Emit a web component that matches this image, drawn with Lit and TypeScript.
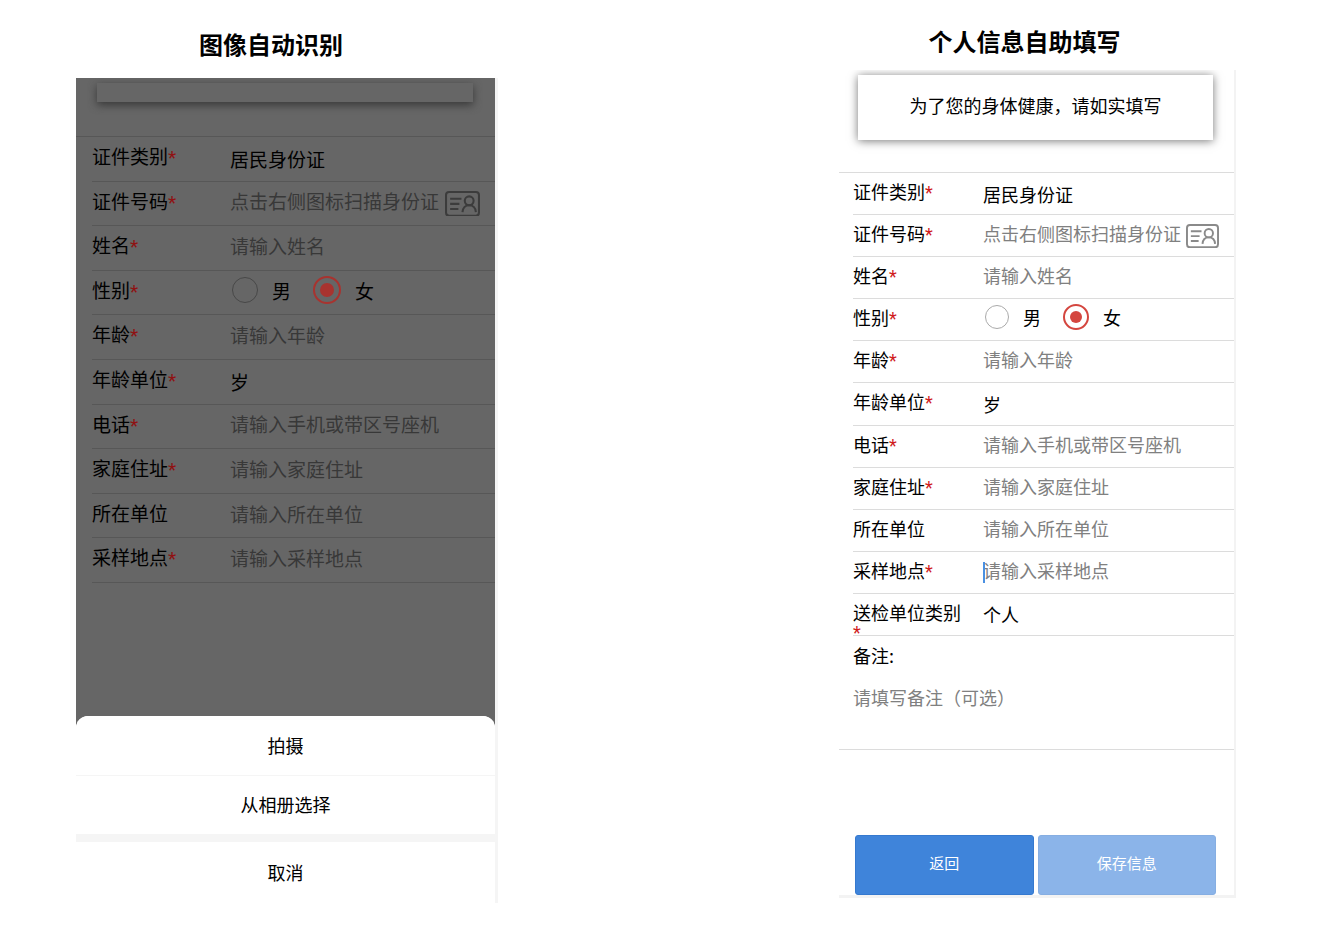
import { LitElement, html, css, svg, nothing } from "lit";
import { customElement, property } from "lit/decorators.js";

type Field = {
  id: string;
  label: string;
  required?: boolean;
  kind: "text" | "select" | "scan" | "gender";
  hint?: string;
  value?: string;
  caret?: boolean;
};

const baseFields: Field[] = [
  { id: "cardType", label: "证件类别", required: true, kind: "select", value: "居民身份证" },
  { id: "cardNo", label: "证件号码", required: true, kind: "scan", hint: "点击右侧图标扫描身份证" },
  { id: "name", label: "姓名", required: true, kind: "text", hint: "请输入姓名" },
  { id: "gender", label: "性别", required: true, kind: "gender" },
  { id: "age", label: "年龄", required: true, kind: "text", hint: "请输入年龄" },
  { id: "ageUnit", label: "年龄单位", required: true, kind: "select", value: "岁" },
  { id: "phone", label: "电话", required: true, kind: "text", hint: "请输入手机或带区号座机" },
  { id: "address", label: "家庭住址", required: true, kind: "text", hint: "请输入家庭住址" },
  { id: "company", label: "所在单位", kind: "text", hint: "请输入所在单位" },
  { id: "place", label: "采样地点", required: true, kind: "text", hint: "请输入采样地点" },
];

const fullFields: Field[] = [
  ...baseFields.map((f) => (f.id === "place" ? { ...f, caret: true } : f)),
  { id: "sender", label: "送检单位类别", required: true, kind: "select", value: "个人" },
];

const scanIcon = svg`
  <rect x="1" y="1" width="32" height="23" rx="3"></rect>
  <path d="M5 7.500h11M5 12.500h9M5 17.500h8"></path>
  <circle cx="23.500" cy="9.500" r="4.300"></circle>
  <path d="M17 20.500c.3-4.200 3-6.700 6.500-6.700s6.200 2.500 6.500 6.700"></path>`;

@customElement("info-form")
export class InfoForm extends LitElement {
  @property({ attribute: false }) fields: Field[] = [];

  static styles = css`
    :host {
      display: grid;
      grid-auto-rows: minmax(0, 1fr);
      border-top: 1px solid var(--line);
      font-size: var(--size);
      color: #000;
    }
    .row {
      display: flex;
      margin-left: var(--indent);
      border-bottom: 1px solid var(--line);
      box-sizing: border-box;
    }
    .name {
      flex: none;
      box-sizing: border-box;
      width: var(--label);
      padding: var(--drop) 18px 0 0;
      line-height: 19px;
    }
    .star {
      font-family: Roboto, sans-serif;
      color: var(--red);
    }
    input,
    select,
    button {
      font: inherit;
      color: inherit;
      border: 0;
      margin: 0;
      padding: 0;
      background: none;
      border-radius: 0;
      outline: 0;
    }
    .control {
      flex: 1;
      min-width: 0;
      height: 100%;
      box-sizing: border-box;
    }
    select {
      appearance: none;
    }
    input.control {
      padding-bottom: 5px;
    }
    input::placeholder {
      color: var(--hint);
      opacity: 1;
    }
    .entry {
      flex: 1;
      min-width: 0;
      display: flex;
      align-items: center;
      position: relative;
    }
    .caret {
      position: absolute;
      left: 0;
      width: 2px;
      height: 21px;
      background: #4a90e2;
    }
    .scan {
      flex: none;
      display: flex;
      margin-right: 15px;
    }
    .scan svg {
      width: var(--icon);
      fill: none;
      stroke: var(--icon-ink);
      stroke-width: 2;
    }
    .gender {
      display: flex;
      align-items: center;
      padding: 0 0 5px 2px;
    }
    .option {
      display: flex;
      align-items: center;
      gap: 14px;
      margin-right: 22px;
    }
    .option input {
      appearance: none;
      display: grid;
      place-items: center;
      width: var(--radio);
      height: var(--radio);
      box-sizing: border-box;
      border: 1px solid var(--ring);
      border-radius: 50%;
    }
    .option input:checked {
      width: var(--radio-on);
      height: var(--radio-on);
      border: 2px solid var(--accent);
    }
    .option input:checked::before {
      content: "";
      width: var(--dot);
      height: var(--dot);
      border-radius: 50%;
      background: var(--accent);
    }
  `;

  private control(f: Field) {
    if (f.kind === "select") {
      return html`<select class="control" id=${f.id}>
        <option>${f.value}</option>
      </select>`;
    }
    if (f.kind === "gender") {
      return html`<div class="gender" role="radiogroup" aria-labelledby="gender-label">
        <label class="option"><input type="radio" name="gender" value="m" />男</label>
        <label class="option"><input type="radio" name="gender" value="f" checked />女</label>
      </div>`;
    }
    return html`<div class="entry">
      ${f.caret ? html`<span class="caret"></span>` : nothing}
      <input class="control" type="text" id=${f.id} placeholder=${f.hint ?? ""} />
      ${f.kind === "scan"
        ? html`<button class="scan" type="button" aria-label="扫描身份证">
            <svg viewBox="0 0 34 25" aria-hidden="true">${scanIcon}</svg>
          </button>`
        : nothing}
    </div>`;
  }

  render() {
    return this.fields.map((f) => {
      const text = html`${f.label}${f.required ? html`<wbr /><span class="star">*</span>` : nothing}`;
      return html`<div class="row">
        ${f.kind === "gender"
          ? html`<span class="name" id="gender-label">${text}</span>`
          : html`<label class="name" for=${f.id}>${text}</label>`}
        ${this.control(f)}
      </div>`;
    });
  }
}

@customElement("app-root")
export class AppRoot extends LitElement {
  static styles = css`
    :host {
      display: block;
      background: #fff;
      min-height: 100vh;
      font-family: "Noto Sans CJK SC", "Noto Sans", sans-serif;
      color: #000;
    }
    .page {
      display: grid;
      grid-template-columns: 422fr 341fr 397fr;
      padding: 0 101px 0 76px;
    }
    .right {
      grid-column: 3;
    }
    h2 {
      margin: 0;
      font-size: 24px;
      line-height: 32px;
      font-weight: 700;
      text-align: center;
    }
    .left h2 {
      padding: 28px 32px 18px 0;
    }
    .right h2 {
      padding: 25px 26px 13px 0;
    }
    .dimmed {
      --size: 19px;
      --label: 138px;
      --indent: 16px;
      --drop: 9px;
      --line: #575757;
      --hint: #383838;
      --red: #8f1212;
      --ring: #484848;
      --accent: #a8332f;
      --icon: 35px;
      --icon-ink: #3c3c3c;
      --radio: 26px;
      --radio-on: 28px;
      --dot: 14px;
      border-right: 3px solid #f5f5f5;
      background: #666;
    }
    .peek {
      height: 58px;
      overflow: hidden;
      padding: 0 22px 0 21px;
      box-sizing: border-box;
    }
    .strip {
      margin-top: 5px;
      height: 19px;
      background: #666;
      box-shadow: 0 3px 8px #383838;
    }
    .dimmed info-form {
      height: 446px;
    }
    .sheet {
      margin-top: 133px;
      background: #fff;
      border-radius: 12px 12px 0 0;
      overflow: hidden;
    }
    .sheet button {
      display: block;
      box-sizing: border-box;
      width: 100%;
      height: 59px;
      border: 0;
      padding: 0 0 2px;
      background: #fff;
      font: inherit;
      font-size: 18px;
      color: #000;
    }
    .sheet .album {
      border-top: 1px solid #f5f5f5;
    }
    .sheet .cancel {
      border-top: 8px solid #f5f5f5;
      height: 69px;
    }
    .light {
      --size: 18px;
      --label: 130px;
      --indent: 14px;
      --drop: 9px;
      --line: #dcdcdc;
      --hint: #808080;
      --red: #d01c1c;
      --ring: #aaa;
      --accent: #d4463f;
      --icon: 33px;
      --icon-ink: #8a8a8a;
      --radio: 24px;
      --radio-on: 26px;
      --dot: 12px;
      border-right: 2px solid #f3f3f3;
      border-bottom: 3px solid #f3f3f3;
    }
    .banner {
      overflow: hidden;
      padding: 5px 21px 32px 19px;
    }
    .notice {
      margin: 0;
      font-size: 18px;
      line-height: 24px;
      padding: 18px 0 23px;
      text-align: center;
      box-shadow: 0 1px 9px #777;
    }
    .light info-form {
      height: 463px;
    }
    .remark {
      padding: 6px 14px 0;
      border-bottom: 1px solid #dcdcdc;
      font-size: 18px;
      line-height: 26px;
    }
    .remark label {
      display: block;
    }
    .remark textarea {
      display: block;
      width: 100%;
      height: 81px;
      box-sizing: border-box;
      padding: 16px 0 0;
      margin: 0;
      border: 0;
      outline: 0;
      resize: none;
      background: none;
      font: inherit;
    }
    .remark textarea::placeholder {
      color: #808080;
    }
    .actions {
      display: grid;
      grid-template-columns: 1fr 1fr;
      gap: 4px;
      padding: 85px 18px 0 16px;
    }
    .actions button {
      height: 60px;
      padding: 0 0 5px;
      border: 1px solid #3579cf;
      border-radius: 3px;
      background: #3f84da;
      color: #fff;
      font: inherit;
      font-size: 15px;
    }
    .actions .save {
      background: #8bb4e9;
      border-color: #86aee2;
    }
  `;

  render() {
    return html`<main class="page">
      <section class="left">
        <h2>图像自动识别</h2>
        <div class="dimmed">
          <div class="peek"><div class="strip"></div></div>
          <info-form .fields=${baseFields}></info-form>
          <div class="sheet">
            <button type="button">拍摄</button>
            <button type="button" class="album">从相册选择</button>
            <button type="button" class="cancel">取消</button>
          </div>
        </div>
      </section>
      <section class="right">
        <h2>个人信息自助填写</h2>
        <div class="light">
          <div class="banner"><p class="notice">为了您的身体健康，请如实填写</p></div>
          <info-form .fields=${fullFields}></info-form>
          <div class="remark">
            <label for="remark">备注:</label>
            <textarea id="remark" placeholder="请填写备注（可选）"></textarea>
          </div>
          <div class="actions">
            <button type="button">返回</button>
            <button type="button" class="save">保存信息</button>
          </div>
        </div>
      </section>
    </main>`;
  }
}
